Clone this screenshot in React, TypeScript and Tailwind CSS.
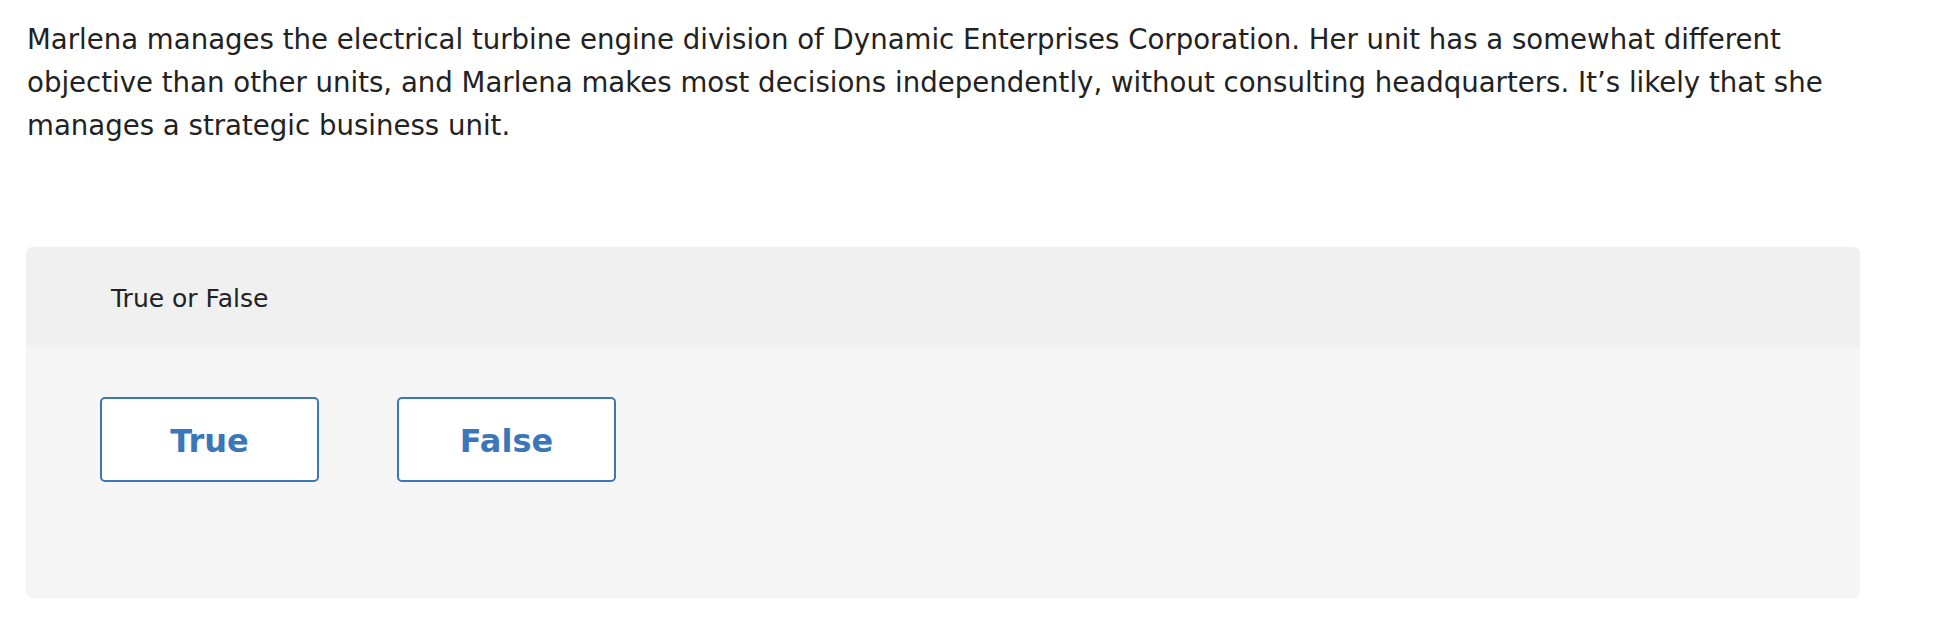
export default function App() {
    return (
        <div className="min-h-screen bg-white pt-[18px] pl-[26px] pr-[78px] font-['DejaVu_Sans','Open_Sans',sans-serif] text-[#222222]">
            {/* Question prompt */}
            <p className="pl-px text-[27.6px] leading-[43px]">
                Marlena manages the electrical turbine engine division of Dynamic Enterprises Corporation. Her unit has a somewhat different
                <br />
                objective than other units, and Marlena makes most decisions independently, without consulting headquarters. It’s likely that she
                <br />
                manages a strategic business unit.
            </p>

            {/* Answer card */}
            <div className="mt-[100px] overflow-hidden rounded-md">
                <div className="flex h-[100px] items-center bg-[#f0f0f0] pl-[85px] pt-[4px] text-[25px]">True or False</div>
                <div className="flex h-[251px] items-start gap-[78px] bg-[#f5f5f5] pl-[74px] pt-[50px]">
                    <button className="flex h-[85px] w-[219px] items-center justify-center rounded-[5px] border-2 border-[#3b76b9] bg-white pt-[3px] text-[32px] font-bold text-[#3b76b9]">
                        True
                    </button>
                    <button className="flex h-[85px] w-[219px] items-center justify-center rounded-[5px] border-2 border-[#3b76b9] bg-white pt-[3px] text-[32px] font-bold text-[#3b76b9]">
                        False
                    </button>
                </div>
            </div>
        </div>
    );
}
